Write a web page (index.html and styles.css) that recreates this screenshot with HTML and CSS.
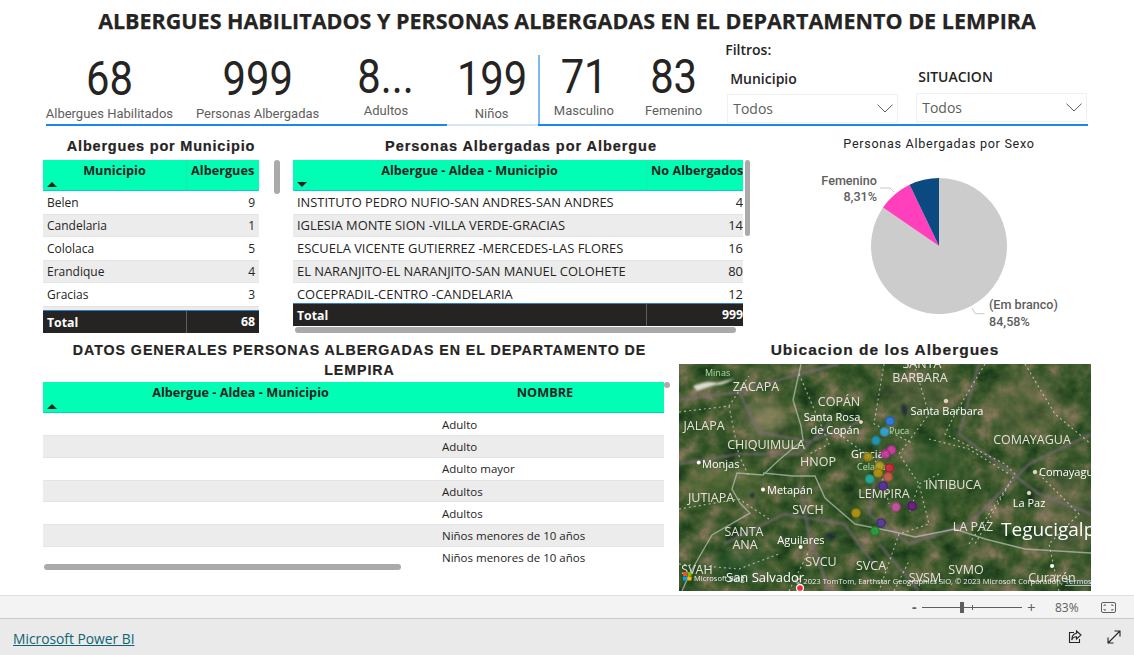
FILE: index.html
```html
<!DOCTYPE html>
<html lang="es">
<head>
<meta charset="utf-8">
<title>Albergues Lempira</title>
<link rel="stylesheet" href="styles.css">
</head>
<body>
<main class="canvas">
  <h1 class="title">ALBERGUES HABILITADOS Y PERSONAS ALBERGADAS EN EL DEPARTAMENTO DE LEMPIRA</h1>

  <section class="band">
    <div class="kpi k1"><div class="num">68</div><div class="lab">Albergues Habilitados</div></div>
    <div class="kpi k2"><div class="num">999</div><div class="lab">Personas Albergadas</div></div>
    <div class="kpi k3 up"><div class="num">8...</div><div class="lab">Adultos</div></div>
    <div class="kpi k4"><div class="num">199</div><div class="lab">Niños</div></div>
    <div class="kpi k5 up"><div class="num">71</div><div class="lab">Masculino</div></div>
    <div class="kpi k6 up"><div class="num">83</div><div class="lab">Femenino</div></div>
    <div class="filters">
      <div class="filters-title">Filtros:</div>
      <div class="slicers">
        <div class="slicer s1">
          <div class="slicer-label">Municipio</div>
          <div class="drop"><span>Todos</span><svg class="chev" width="16" height="9" viewBox="0 0 16 9"><path d="M.5.7 8 8 15.5.7" fill="none" stroke="#605e5c"/></svg></div>
        </div>
        <div class="slicer s2">
          <div class="slicer-label">SITUACION</div>
          <div class="drop"><span>Todos</span><svg class="chev" width="16" height="9" viewBox="0 0 16 9"><path d="M.5.7 8 8 15.5.7" fill="none" stroke="#605e5c"/></svg></div>
        </div>
      </div>
    </div>
  </section>
  <div class="rule"><i class="r1"></i><i class="r2"></i><i class="r3"></i></div>

  <section class="row-mid">
    <div class="panel p1">
      <div class="tbl-wrap">
        <h2 class="vtitle vt1">Albergues por Municipio</h2>
        <div class="head g1">
          <div class="hc">Municipio<svg class="sort" width="10" height="5" viewBox="0 0 10 5"><path d="M0 5 5 0l5 5z" fill="#252423"/></svg></div>
          <div class="hc sep nowrap">Albergues</div>
        </div>
        <div class="body b1">
          <div class="tr g1"><span>Belen</span><span class="n">9</span></div>
          <div class="tr g1 alt"><span>Candelaria</span><span class="n">1</span></div>
          <div class="tr g1"><span>Cololaca</span><span class="n">5</span></div>
          <div class="tr g1 alt"><span>Erandique</span><span class="n">4</span></div>
          <div class="tr g1"><span>Gracias</span><span class="n">3</span></div>
          <div class="tr g1 alt"></div>
        </div>
        <div class="total g1 t1"><span>Total</span><span class="n">68</span></div>
      </div>
      <div class="vbar vb1"></div>
    </div>

    <div class="panel p2">
      <div class="tbl-wrap w2">
        <h2 class="vtitle vt2">Personas Albergadas por Albergue</h2>
        <div class="head g2">
          <div class="hc">Albergue - Aldea - Municipio<svg class="sort" width="10" height="5" viewBox="0 0 10 5"><path d="M0 0h10L5 5z" fill="#252423"/></svg></div>
          <div class="hc sep nowrap">No Albergados</div>
        </div>
        <div class="body b2">
          <div class="tr g2"><span>INSTITUTO PEDRO NUFIO-SAN ANDRES-SAN ANDRES</span><span class="n">4</span></div>
          <div class="tr g2 alt"><span>IGLESIA MONTE SION -VILLA VERDE-GRACIAS</span><span class="n">14</span></div>
          <div class="tr g2"><span>ESCUELA VICENTE GUTIERREZ -MERCEDES-LAS FLORES</span><span class="n">16</span></div>
          <div class="tr g2 alt"><span>EL NARANJITO-EL NARANJITO-SAN MANUEL COLOHETE</span><span class="n">80</span></div>
          <div class="tr g2"><span>COCEPRADIL-CENTRO -CANDELARIA</span><span class="n">12</span></div>
        </div>
        <div class="total g2 t2"><span>Total</span><span class="n">999</span></div>
        <div class="hbar hb2"></div>
      </div>
      <div class="vbar vb2"></div>
    </div>

    <div class="panel p3">
      <svg class="pie" width="300" height="199" viewBox="0 0 300 199">
        <text class="pie-title" x="150" y="11" text-anchor="middle">Personas Albergadas por Sexo</text>
        <path d="M150 109V41A68 68 0 1 1 94 70.5Z" fill="#ccc"/>
        <path d="M150 109 94 70.5A68 68 0 0 1 120.6 47.7Z" fill="#ff3fbc"/>
        <path d="M150 109 120.6 47.7A68 68 0 0 1 150 41Z" fill="#0b4a80"/>
        <path d="M91 51h10l4 4M183 171l3.4 5.7h9.1" fill="none" stroke="#c8c8c8"/>
        <text class="pie-lab" x="88" y="48" text-anchor="end">Femenino</text>
        <text class="pie-lab" x="88" y="64" text-anchor="end">8,31%</text>
        <text class="pie-lab" x="200" y="172">(Em branco)</text>
        <text class="pie-lab" x="200" y="189">84,58%</text>
      </svg>
    </div>
  </section>

  <section class="row-low">
    <div class="panel p4">
      <h2 class="vtitle wide">DATOS GENERALES PERSONAS ALBERGADAS EN EL DEPARTAMENTO DE LEMPIRA</h2>
      <div class="head g3">
        <div class="hc">Albergue - Aldea - Municipio<svg class="sort" width="10" height="5" viewBox="0 0 10 5"><path d="M0 5 5 0l5 5z" fill="#252423"/></svg></div>
        <div class="hc">NOMBRE</div>
      </div>
      <div class="body b3">
        <div class="tr g3 low"><span></span><span>Adulto</span></div>
        <div class="tr g3 low alt"><span></span><span>Adulto</span></div>
        <div class="tr g3 low"><span></span><span>Adulto mayor</span></div>
        <div class="tr g3 low alt"><span></span><span>Adultos</span></div>
        <div class="tr g3 low"><span></span><span>Adultos</span></div>
        <div class="tr g3 low alt"><span></span><span>Niños menores de 10 años</span></div>
        <div class="tr g3 low"><span></span><span>Niños menores de 10 años</span></div>
        <div class="hbar hb3"></div>
      </div>
      <div class="dot"></div>
    </div>

    <div class="panel p5">
      <h2 class="vtitle map-title">Ubicacion de los Albergues</h2>
      <svg class="map" width="412" height="227" viewBox="0 0 412 227">
        <defs>
          <filter id="terrain" x="0" y="0" width="100%" height="100%" color-interpolation-filters="sRGB">
            <feTurbulence type="fractalNoise" baseFrequency="0.05" numOctaves="6" seed="11"/>
            <feColorMatrix values="1 0 0 0 0 1 0 0 0 0 1 0 0 0 0 0 0 0 0 1"/>
            <feComponentTransfer>
              <feFuncR type="table" tableValues="0.08 0.1 0.17 0.25 0.38 0.54 0.66"/>
              <feFuncG type="table" tableValues="0.15 0.22 0.3 0.36 0.41 0.47 0.56"/>
              <feFuncB type="table" tableValues="0.07 0.1 0.14 0.18 0.26 0.38 0.48"/>
            </feComponentTransfer>
          </filter>
          <filter id="soft"><feGaussianBlur stdDeviation="7"/></filter>
          <filter id="soft2"><feGaussianBlur stdDeviation="1"/></filter>
        </defs>
        <rect width="412" height="227" filter="url(#terrain)"/>
        <g filter="url(#soft)">
          <ellipse cx="85" cy="54" rx="22" ry="16" fill="#a69570" opacity=".6"/>
          <ellipse cx="345" cy="40" rx="40" ry="30" fill="#8c7d5c" opacity=".3"/>
          <ellipse cx="240" cy="30" rx="40" ry="20" fill="#7d6f5a" opacity=".3"/>
          <ellipse cx="250" cy="110" rx="30" ry="30" fill="#2e5a2c" opacity=".55"/>
          <ellipse cx="60" cy="200" rx="30" ry="15" fill="#2a5a30" opacity=".5"/>
          <ellipse cx="45" cy="120" rx="40" ry="20" fill="#6f7a45" opacity=".4"/>
          <ellipse cx="385" cy="150" rx="30" ry="40" fill="#8a7c66" opacity=".3"/>
        </g>
        <g filter="url(#soft2)" fill="none" stroke="#7d6c78" stroke-width="2.600" opacity=".7">
          <path d="M0 36 60 28l60-18 40-10M60 28l20 40 50 10 50-20M0 100l60-10 60 0 30-30M45 180l60-30 60 10 30 40M200 90l-10 60 40 30 60-20 60-60 62-30M300 0l-20 70 80 60 52 20M200 180l40 47M120 120l10 50 20 57"/>
        </g>
        <g fill="none" stroke="#dfe4d6" stroke-width="1.100" stroke-dasharray="2 3" opacity=".7">
          <path d="M0 48 50 42l20-30M50 42l10 50 10 20M0 145l60-10 30 20M120 10l30 70-20 10M160 70l40 30 10 40M205 0l-10 60 40 20M235 0l15 50-30 40 20 30-10 30M306 0l-30 50-10 20 60 30 10 10-40 70M250 75l40 10 40 25M346 0l30 50 36 30M360 110l40 40-30 30 10 47M260 110l-20 10 10 40 -30 10 -20 57M330 120l-40 60M0 200l60 5 40-15M110 227l20-40M215 227l15-30"/>
        </g>
        <g fill="none" stroke="#b8c6b8" stroke-width="1.400" opacity=".7">
          <path d="M122 0l-8 36 8 26 2 14-24 20-16 15-26-2-5 16 8 14 10 10-38 22-22 38-8 18"/>
          <path d="M84 109l30 3 22 0 10 22 30 26 40 8 20 5 40-8 30 10 40 10 66 4"/>
        </g>
        <path d="M74 128q4 4-1 7l-3-4zM145 170q10-3 12 3l-5 4zM223 40q6 0 6 7l-3 6-4-6z" fill="#1c2c38" opacity=".85" filter="url(#soft2)"/>
        <path d="M14 22q15-6 24-3l18-5q-12 8-20 7l-18 6z" fill="#dcdcd0" filter="url(#soft2)"/>
        <g fill="#fff">
          <circle cx="19.700" cy="98.600" r="2"/><circle cx="84" cy="125.600" r="2"/><circle cx="121.600" cy="183" r="2"/><circle cx="373" cy="202" r="2"/>
        </g>
        <g fill="#f6c8b0" stroke="#fff" stroke-width=".6">
          <circle cx="182" cy="58" r="1.500"/><circle cx="267" cy="37" r="1.800"/><circle cx="356" cy="108" r="1.800"/><circle cx="350" cy="129" r="1.800"/>
        </g>

        <g class="ml">
          <text class="gn small" x="26" y="12">Minas</text>
          <text class="st" x="77" y="27" text-anchor="middle">ZACAPA</text>
          <text class="st" x="160" y="42" text-anchor="middle">COPÁN</text>
          <text class="ct" x="153" y="57" text-anchor="middle">Santa Rosa</text>
          <text class="ct" x="156" y="70" text-anchor="middle">de Copán</text>
          <text class="st" x="25" y="66" text-anchor="middle">JALAPA</text>
          <text class="st" x="87" y="85" text-anchor="middle">CHIQUIMULA</text>
          <text class="st" x="139" y="102" text-anchor="middle">HNOP</text>
          <text class="ct" x="191" y="94" text-anchor="middle">Gracias</text>
          <text class="gn small" x="178" y="106">Celaque</text>
          <text class="gn small" x="210" y="70">Puca</text>
          <text class="ct" x="23" y="104">Monjas</text>
          <text class="st" x="32" y="138" text-anchor="middle">JUTIAPA</text>
          <text class="ct" x="88" y="130">Metapán</text>
          <text class="st" x="129" y="150" text-anchor="middle">SVCH</text>
          <text class="st" x="205" y="134" text-anchor="middle">LEMPIRA</text>
          <text class="st" x="65" y="172" text-anchor="middle">SANTA</text>
          <text class="st" x="66" y="185" text-anchor="middle">ANA</text>
          <text class="ct" x="122" y="180" text-anchor="middle">Aguilares</text>
          <text class="st" x="142" y="202" text-anchor="middle">SVCU</text>
          <text class="st" x="192" y="206" text-anchor="middle">SVCA</text>
          <text class="st" x="18" y="210" text-anchor="middle">SVAH</text>
          <text class="ct big" x="47" y="218">San Salvador</text>
          <text class="st" x="243" y="4" text-anchor="middle">SANTA</text>
          <text class="st" x="241" y="18" text-anchor="middle">BARBARA</text>
          <text class="ct" x="268" y="51" text-anchor="middle">Santa Barbara</text>
          <text class="st" x="353" y="80" text-anchor="middle">COMAYAGUA</text>
          <text class="ct" x="360" y="112">Comayagua</text>
          <text class="st" x="274" y="125" text-anchor="middle">INTIBUCA</text>
          <text class="ct" x="350" y="143" text-anchor="middle">La Paz</text>
          <text class="st" x="294" y="167" text-anchor="middle">LA PAZ</text>
          <text class="ct huge" x="322" y="172">Tegucigalpa</text>
          <text class="st" x="287" y="210" text-anchor="middle">SVMO</text>
          <text class="st" x="246" y="218" text-anchor="middle">SVSM</text>
          <text class="st" x="373" y="218" text-anchor="middle">Curarén</text>
          <text class="credit" x="116" y="220">© 2023 TomTom, Earthstar Geographics SIO, © 2023 Microsoft Corporation, <tspan class="terms">Termos</tspan></text>
          <text class="brand" x="15" y="217">Microsoft Bing</text>
        </g>
        <g>
          <rect x="4" y="208" width="4" height="4" fill="#f25022"/><rect x="8.500" y="208" width="4" height="4" fill="#7fba00"/>
          <rect x="4" y="212.500" width="4" height="4" fill="#00a4ef"/><rect x="8.500" y="212.500" width="4" height="4" fill="#ffb900"/>
        </g>
        <g stroke-width="1.300" fill-opacity=".88">
          <circle cx="211" cy="57" r="4.200" fill="#2a7fe8" stroke="#2560b8"/>
          <circle cx="205.500" cy="68" r="4.200" fill="#35a8d8" stroke="#2c8ab0"/>
          <circle cx="197" cy="76.600" r="4.200" fill="#1f9bbb" stroke="#197e98"/>
          <circle cx="212.500" cy="86" r="4.200" fill="#d63fa8" stroke="#a83084"/>
          <circle cx="206.500" cy="90" r="4.200" fill="#c7389c" stroke="#9c2c7a"/>
          <circle cx="189" cy="93" r="4.200" fill="#a88f10" stroke="#86720c"/>
          <circle cx="200.600" cy="102" r="4.200" fill="#b8a020" stroke="#927e18"/>
          <circle cx="210.500" cy="104" r="4.200" fill="#c8283a" stroke="#a0202e"/>
          <circle cx="199" cy="109" r="4.200" fill="#b89410" stroke="#92760c"/>
          <circle cx="209" cy="113" r="4.200" fill="#d0604f" stroke="#a84c3e"/>
          <circle cx="190.700" cy="115" r="4.200" fill="#25b3a0" stroke="#1d8f80"/>
          <circle cx="204" cy="122" r="4.200" fill="#5b2ea0" stroke="#482480"/>
          <circle cx="217" cy="143" r="4.200" fill="#d050a8" stroke="#a64086"/>
          <circle cx="233" cy="142" r="4.200" fill="#6a1e84" stroke="#50166a"/>
          <circle cx="177" cy="149" r="4.200" fill="#b89a10" stroke="#927a0c"/>
          <circle cx="202" cy="159" r="4.200" fill="#5a3a9a" stroke="#462e7a"/>
          <circle cx="196" cy="167" r="4.200" fill="#2ea040" stroke="#248032"/>
          <circle cx="121" cy="224" r="3.500" fill="#ee2b36" stroke="#fff" fill-opacity="1"/>
        </g>
      </svg>
    </div>
  </section>
</main>

<div class="zoombar">
  <span class="zminus">-</span>
  <div class="slider"><i class="thumb"></i><i class="tick"></i></div>
  <span class="zplus">+</span>
  <span class="zpct">83%</span>
  <svg class="fit" width="15" height="11" viewBox="0 0 15 11"><rect x=".5" y=".5" width="14" height="10" rx="1.500" fill="none" stroke="#605e5c"/><path d="M3 4V3h2M10 3h2v1M3 7v1h2M10 8h2V7" fill="none" stroke="#605e5c"/></svg>
</div>

<footer class="foot">
  <a class="pbi" href="#">Microsoft Power BI</a>
  <div class="foot-icons">
    <svg width="14" height="14" viewBox="0 0 14 14"><path d="M6 2.500H1.500v10h10V9" fill="none" stroke="#252423" stroke-width="1.100"/><path d="M8.500 1 13 5 8.500 9V6.800C6 6.800 4.500 8 3.800 10 3.800 6.500 5.500 3.800 8.500 3.300z" fill="none" stroke="#252423" stroke-width="1.100"/></svg>
    <svg width="14" height="14" viewBox="0 0 14 14"><path d="M1 13 13 1M7.500 1H13v5.500M1 7.500V13h5.500" fill="none" stroke="#252423" stroke-width="1.100"/></svg>
  </div>
</footer>
</body>
</html>
```
FILE: styles.css
```css
* { box-sizing: border-box; }
html, body { margin: 0; padding: 0; }
body {
  width: 1134px; height: 655px; overflow: hidden; background: #fff;
  font-family: "Open Sans", "Noto Sans", sans-serif; color: #252423;
}
.canvas { height: 595px; display: flex; flex-direction: column; }
.title {
  margin: 0; height: 40px; line-height: 41px; text-align: center;
  font-family: "Open Sans", sans-serif; font-size: 21.5px; font-weight: 700; color: #252423; white-space: nowrap;
  -webkit-text-stroke: .25px #252423;
}

/* KPI band */
.band { display: flex; height: 84px; margin-left: 43px; width: 1045px; }
.kpi { text-align: center; padding-top: 12px; }
.k1 { width: 134px; }
.k2 { width: 165px; }
.k3 { width: 94px; }
.k4 { width: 105px; padding-left: 14px; }
.k5 { width: 91px; margin-left: 1px; border-left: 2px solid #7db9f0; height: 71px; margin-top: 15px; }
.k6 { width: 92px; }
.kpi.up { padding-top: 10px; }
.kpi.k5.up { padding-top: 0; }
.k5 .num { margin-top: -5.5px; }
.num {
  font-family: "Roboto", sans-serif; font-size: 48px; line-height: 54px; color: #252423;
  transform: scaleX(.87);
}
.up .num { margin-bottom: -1px; }
.lab { font-family: "Roboto", sans-serif; font-size: 13px; line-height: 16px; color: #605e5c; white-space: nowrap; }
.filters { width: 366px; margin-left: 6px; }
.filters-title { font-size: 14px; font-weight: 600; line-height: 20px; color: #252423; }
.slicers { display: flex; }
.slicer { width: 171px; }
.s1 { margin-left: 2px; margin-top: 9px; }
.s2 { margin-left: 18px; margin-top: 7px; }
.slicer-label { font-size: 14px; font-weight: 600; line-height: 19px; padding-left: 3px; color: #252423; margin-bottom: 6px; }
.s2 .slicer-label { padding-left: 2px; margin-bottom: 7px; }
.drop {
  height: 29px; border: 1px solid #f0f0f0; display: flex; align-items: center; justify-content: space-between;
  padding: 0 4px 0 5px; font-size: 14px; color: #605e5c;
}
.rule { display: flex; margin-left: 46px; width: 1042px; height: 2px; }
.rule i { display: block; height: 2px; }
.r1 { width: 401px; background: #1a86f0; }
.r2 { width: 91px; background: #d4e6f6; }
.r3 { flex: 1; background: #1a86f0; }

/* Middle row */
.row-mid { display: flex; height: 203px; margin-top: 11px; margin-left: 43px; }
.panel { position: relative; }
.p1 { display: flex; width: 250px; }
.tbl-wrap { width: 216px; }
.w2 { width: 450px; }
.p2 { display: flex; width: 457px; }
.p3 { margin-left: 39px; width: 300px; }
.vtitle {
  margin: 0; height: 23px; line-height: 18px; text-align: center;
  font-family: "Liberation Sans", sans-serif; font-size: 14.5px; font-weight: 700; letter-spacing: .8px; color: #252423; white-space: nowrap;
  -webkit-text-stroke: .2px #252423;
}
.vt1 { padding-left: 20px; }
.vt2 { padding-left: 6px; letter-spacing: .95px; }
.head { display: grid; height: 31px; background: #00ffb4; border-bottom: 1px solid #00d2c8; font-size: 12.7px; font-weight: 700; }
.g1 { grid-template-columns: 143px 73px; }
.g2 { grid-template-columns: 353px 97px; }
.g3 { grid-template-columns: 395px 214px; }
.hc { position: relative; text-align: center; padding: 2px 4px; line-height: 17px; }
.hc.sep { border-left: 1px solid #20e8a8; }
.nowrap { white-space: nowrap; padding: 2px 0 0 4px; text-align: left; overflow: hidden; }
.sort { position: absolute; left: 4px; bottom: 3px; }
.body { overflow: hidden; font-size: 12px; color: #252423; position: relative; }
.b1 { height: 119px; }
.b2 { height: 112px; font-size: 12.9px; }
.b3 { height: 157px; overflow: visible; font-size: 11.5px; width: 621px; }
.tr { display: grid; height: 23px; align-items: center; padding: 0 4px; white-space: nowrap; background: #fff; }
.tr.g1 { grid-template-columns: auto 40px; justify-content: space-between; }
.tr.g2 { grid-template-columns: auto 40px; justify-content: space-between; padding: 0 0 2px 4px; }
.tr.low { height: 22.3px; padding: 0; }
.tr.low span:last-child { padding-left: 4px; }
.alt { background: #ececec; border-top: 1px solid #e4e4e4; border-bottom: 1px solid #e4e4e4; }
.n { text-align: right; }
.total { display: grid; height: 23px; align-items: center; background: #252423; color: #fff; font-size: 12.3px; font-weight: 700; border-top: 1px solid #2d7fd0; padding-left: 4px; }
.t1 { grid-template-columns: 139px 73px; }
.t2 { grid-template-columns: 349px 97px; }
.total .n { border-left: 1px solid #605e5c; padding-right: 4px; height: 100%; line-height: 22px; }
.t2 .n { padding-right: 0; white-space: nowrap; }
.vbar { width: 6px; border-radius: 3px; background: #aaa; margin-top: 23px; }
.vb1 { height: 34px; margin-left: 15px; }
.vb2 { height: 76px; margin-left: 2px; }
.hbar { height: 6px; border-radius: 3px; background: #aaa; }
.hb2 { width: 441px; margin-left: 2px; margin-top: 1px; }
.hb3 { position: absolute; left: 1px; top: 151px; width: 357px; }

/* Pie */
.pie { display: block; }
.pie-title { font-family: "Roboto", sans-serif; font-size: 12.6px; letter-spacing: .7px; fill: #252423; }
.pie-lab { font-family: "Roboto", sans-serif; font-size: 12.6px; font-weight: 500; fill: #605e5c; }

/* Bottom row */
.row-low { display: flex; margin-left: 43px; }
.p4 { width: 636px; }
.wide { height: 42px; line-height: 20px; white-space: normal; padding: 0 10px 0 16px; width: 627px; letter-spacing: .97px; font-size: 14.2px; }
.p4 .head { width: 621px; }
.dot { position: absolute; left: 621px; top: 42px; width: 6px; height: 6px; border-radius: 50%; background: #aaa; }
.map-title { height: 24px; font-size: 15.5px; line-height: 19px; letter-spacing: 1px; }
.map { display: block; filter: blur(.35px); }

/* Map labels */
.ml text { font-family: "Open Sans", sans-serif; }
.st { font-size: 12.5px; fill: #e6e2da; font-weight: 500; }
.ct { font-size: 11px; fill: #fff; }
.big { font-size: 13px; }
.huge { font-size: 19px; }
.small { font-size: 9px; }
.gn { fill: #a5e0a0; }
.credit { font-size: 7.6px; fill: #eee; }
.terms { fill: #d8e4ff; text-decoration: underline; }
.brand { font-size: 7.5px; fill: #eee; }

/* Zoom bar */
.zoombar {
  height: 24px; background: #f3f3f3; border-top: 1px solid #e0e0e0; border-bottom: 1px solid #c8c8c8;
  display: flex; align-items: center; font-size: 12px; color: #605e5c; padding-left: 912px;
}
.zminus { width: 10px; font-weight: 700; font-size: 14px; line-height: 14px; }
.slider { position: relative; width: 100px; height: 1px; background: #605e5c; }
.thumb { position: absolute; left: 38px; top: -5px; width: 4px; height: 11px; background: #605e5c; }
.tick { position: absolute; left: 50px; top: -2px; width: 1px; height: 5px; background: #605e5c; }
.zplus { margin-left: 5px; width: 28px; font-size: 15px; line-height: 14px; color: #605e5c; }
.zpct { width: 46px; font-size: 12px; }
.fit { display: block; }

/* Footer */
.foot { height: 36px; background: #eaeaea; display: flex; align-items: center; justify-content: space-between; padding: 3px 13px 0; }
.pbi { color: #0e6470; font-size: 13.8px; text-decoration: underline; font-weight: 500; }
.foot-icons { display: flex; gap: 25px; margin-top: -3px; }
.foot-icons svg { display: block; }
```
